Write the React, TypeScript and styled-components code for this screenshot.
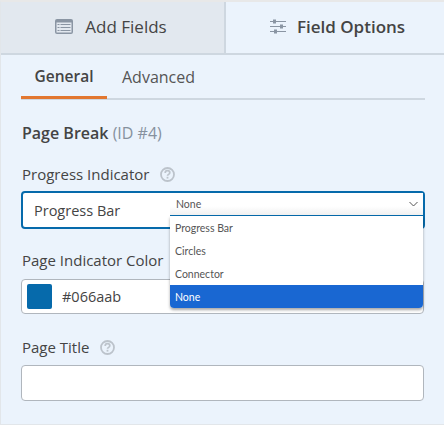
import React from 'react';
import styled, { createGlobalStyle } from 'styled-components';

const GlobalStyle = createGlobalStyle`
  html, body { margin: 0; padding: 0; background: #ebf3fc; }
  body { font-family: "Open Sans", "Noto Sans", sans-serif; color: #444; }
  * { box-sizing: border-box; }
`;

const Panel = styled.div`
  width: 444px;
  height: 425px;
  overflow: hidden;
  background: #ebf3fc;
  border-top: 2px solid #e8e8e8;
  border-left: 1px solid #e2e6ea;
  border-bottom: 1px solid #e2e6ea;
`;

const TabBar = styled.div`
  display: flex;
  height: 53px;
  margin-left: -1px;
  border-bottom: 2px solid #ced7e0;
`;

const Tab = styled.div<{ $active?: boolean }>`
  display: flex;
  align-items: center;
  justify-content: center;
  gap: ${p => (p.$active ? '11px' : '12px')};
  width: ${p => (p.$active ? '220px' : '224px')};
  padding-left: ${p => (p.$active ? '5px' : '0')};
  padding-right: ${p => (p.$active ? '0' : '2px')};
  padding-bottom: 2px;
  background: ${p => (p.$active ? '#ebf3fc' : '#e2e8ef')};
  border-left: ${p => (p.$active ? '2px solid #ced7e0' : 'none')};
  font-size: 17px;
  font-weight: ${p => (p.$active ? 600 : 400)};
  color: #444;
`;

const Body = styled.div`
  padding: 0 19px 0 20px;
`;

const SubTabs = styled.div`
  display: flex;
  height: 45px;
  border-bottom: 2px solid #ced7e0;
`;

const SubTab = styled.div<{ $active?: boolean }>`
  display: flex;
  align-items: center;
  justify-content: center;
  width: ${p => (p.$active ? '86px' : 'auto')};
  height: 44px;
  margin-left: ${p => (p.$active ? '0' : '15px')};
  font-size: ${p => (p.$active ? '15.5px' : '16px')};
  font-weight: ${p => (p.$active ? 600 : 400)};
  color: ${p => (p.$active ? '#444' : '#555')};
  border-bottom: ${p => (p.$active ? '3px solid #e27730' : 'none')};
`;

const SectionTitle = styled.div`
  margin-top: 23px;
  padding-left: 1px;
  font-size: 16px;
  line-height: 20px;
  font-weight: 600;
  color: #444;
  small {
    font-size: 16px;
    font-weight: 400;
    color: #86919e;
  }
`;

const Label = styled.div`
  display: flex;
  align-items: center;
  gap: 11px;
  height: 20px;
  padding-left: 1px;
  font-size: 15px;
  color: #444;
`;

const Field = styled.div<{ $top: number }>`
  margin-top: ${p => p.$top}px;
`;

const SelectBox = styled.div`
  position: relative;
  display: flex;
  align-items: center;
  height: 38px;
  margin-top: 7px;
  padding-left: 11px;
  background: #fff;
  border: 2px solid #066aab;
  border-radius: 4px;
  font-size: 14.5px;
  color: #444;
`;

const Dropdown = styled.div`
  position: absolute;
  left: 147px;
  top: 0;
  right: 0;
  font-family: "Lato", "Noto Sans", sans-serif;
  font-size: 10.5px;
  color: #555;
`;

const DropdownCurrent = styled.div`
  display: flex;
  align-items: center;
  justify-content: space-between;
  height: 23px;
  padding: 0 5px 0 6px;
  background: linear-gradient(#fff 60%, #f0f0f0);
  border-bottom: 1px solid #066aab;
`;

const DropdownList = styled.div`
  background: #fff;
  border-radius: 0 0 4px 4px;
  box-shadow: 0 2px 3px rgba(0, 0, 0, 0.35);
  overflow: hidden;
`;

const DropdownItem = styled.div<{ $selected?: boolean }>`
  display: flex;
  align-items: center;
  height: 23px;
  padding-left: 5px;
  background: ${p => (p.$selected ? '#1967d2' : '#fff')};
  color: ${p => (p.$selected ? '#fff' : '#555')};
`;

const ColorBox = styled.div`
  display: flex;
  align-items: center;
  gap: 10px;
  height: 35px;
  margin: 9px 1px 0 0;
  padding-left: 5px;
  background: #fff;
  border: 1px solid #b0b6bd;
  border-radius: 4px;
  font-size: 14.5px;
  color: #444;
`;

const Swatch = styled.div`
  width: 25px;
  height: 25px;
  background: #066aab;
  border-radius: 2px;
`;

const TextBox = styled.div`
  height: 36px;
  margin: 8px 1px 0 0;
  background: #fff;
  border: 1px solid #b0b6bd;
  border-radius: 4px;
`;

const ListIcon = () => (
  <svg width="18" height="15" viewBox="0 0 18 15">
    <rect width="18" height="15" rx="2" fill="#8a95a3" />
    <rect x="1.5" y="3.5" width="15" height="10" fill="#e2e8ef" />
    <path d="M2.5 5.5h2M5.5 5.5h10M2.5 8.5h2M5.5 8.5h10M2.5 11.5h2M5.5 11.5h10" stroke="#8a95a3" strokeWidth="1" />
  </svg>
);

const SlidersIcon = () => (
  <svg width="16" height="15" viewBox="0 0 16 15">
    <path d="M0 2.5h16M0 7.5h16M0 12.5h16" stroke="#8a95a3" strokeWidth="1" />
    <rect x="3" y="0.5" width="3" height="4" fill="#8a95a3" />
    <rect x="10" y="5.5" width="3" height="4" fill="#8a95a3" />
    <rect x="4" y="10.5" width="3" height="4" fill="#8a95a3" />
  </svg>
);

const HelpIcon = () => (
  <svg width="15" height="15" viewBox="0 0 15 15">
    <circle cx="7.5" cy="7.5" r="6.5" fill="none" stroke="#bcc3cb" strokeWidth="1.8" />
    <path d="M5.2 5.9c0-1.4 1.1-2.2 2.3-2.2s2.3.8 2.3 2c0 1.7-2.3 1.6-2.3 3.1" fill="none" stroke="#bcc3cb" strokeWidth="1.7" />
    <rect x="6.6" y="9.8" width="1.8" height="1.8" fill="#bcc3cb" />
  </svg>
);

const Chevron = () => (
  <svg width="9" height="6" viewBox="0 0 9 6">
    <path d="M0.5 1l4 4 4-4" fill="none" stroke="#555" strokeWidth="1" />
  </svg>
);

export default function App() {
  return (
    <>
      <GlobalStyle />
      <Panel>
        <TabBar>
          <Tab><ListIcon />Add Fields</Tab>
          <Tab $active><SlidersIcon />Field Options</Tab>
        </TabBar>
        <Body>
          <SubTabs>
            <SubTab $active>General</SubTab>
            <SubTab>Advanced</SubTab>
          </SubTabs>
          <SectionTitle>Page Break <small>(ID #4)</small></SectionTitle>
          <Field $top={21}>
            <Label>Progress Indicator <HelpIcon /></Label>
            <SelectBox>
              Progress Bar
              <Dropdown>
                <DropdownCurrent>None <Chevron /></DropdownCurrent>
                <DropdownList>
                  <DropdownItem>Progress Bar</DropdownItem>
                  <DropdownItem>Circles</DropdownItem>
                  <DropdownItem>Connector</DropdownItem>
                  <DropdownItem $selected>None</DropdownItem>
                </DropdownList>
              </Dropdown>
            </SelectBox>
          </Field>
          <Field $top={21}>
            <Label>Page Indicator Color</Label>
            <ColorBox><Swatch />#066aab</ColorBox>
          </Field>
          <Field $top={23}>
            <Label>Page Title <HelpIcon /></Label>
            <TextBox />
          </Field>
        </Body>
      </Panel>
    </>
  );
}
